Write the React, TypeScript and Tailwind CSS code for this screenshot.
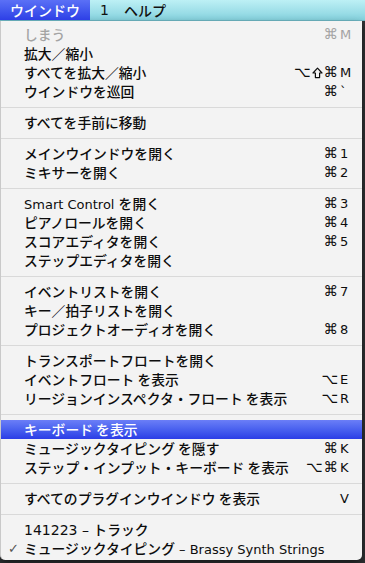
import React from "react";

type Item =
  | { sep: true }
  | {
      sep?: false;
      label: React.ReactNode;
      mod?: string;
      keyChar?: string;
      disabled?: boolean;
      active?: boolean;
      checked?: boolean;
    };

const latin = "font-['DejaVu_Sans'] text-[13px] font-normal";

const ITEMS: Item[] = [
  { label: "しまう", mod: "⌘", keyChar: "M", disabled: true },
  { label: "拡大／縮小" },
  { label: "すべてを拡大／縮小", mod: "⌥⇧⌘", keyChar: "M" },
  { label: "ウインドウを巡回", mod: "⌘", keyChar: "`" },
  { sep: true },
  { label: "すべてを手前に移動" },
  { sep: true },
  { label: "メインウインドウを開く", mod: "⌘", keyChar: "1" },
  { label: "ミキサーを開く", mod: "⌘", keyChar: "2" },
  { sep: true },
  {
    label: (
      <>
        <span className={latin}>Smart Control </span>を開く
      </>
    ),
    mod: "⌘",
    keyChar: "3",
  },
  { label: "ピアノロールを開く", mod: "⌘", keyChar: "4" },
  { label: "スコアエディタを開く", mod: "⌘", keyChar: "5" },
  { label: "ステップエディタを開く" },
  { sep: true },
  { label: "イベントリストを開く", mod: "⌘", keyChar: "7" },
  { label: "キー／拍子リストを開く" },
  { label: "プロジェクトオーディオを開く", mod: "⌘", keyChar: "8" },
  { sep: true },
  { label: "トランスポートフロートを開く" },
  { label: "イベントフロート を表示", mod: "⌥", keyChar: "E" },
  { label: "リージョンインスペクタ・フロート を表示", mod: "⌥", keyChar: "R" },
  { sep: true },
  { label: "キーボード を表示", active: true },
  { label: "ミュージックタイピング を隠す", mod: "⌘", keyChar: "K" },
  { label: "ステップ・インプット・キーボード を表示", mod: "⌥⌘", keyChar: "K" },
  { sep: true },
  { label: "すべてのプラグインウインドウ を表示", keyChar: "V" },
  { sep: true },
  {
    label: (
      <>
        <span className="font-['DejaVu_Sans'] text-[14px] font-normal">141223 – </span>トラック
      </>
    ),
  },
  {
    label: (
      <>
        ミュージックタイピング<span className={latin}> – Brassy Synth Strings</span>
      </>
    ),
    checked: true,
  },
];

function ShiftGlyph() {
  return (
    <svg width="11" height="12" viewBox="0 0 11 12" className="mr-[1px]">
      <path
        d="M5.5 1.2 L10 6 H7.6 V10.6 H3.4 V6 H1 Z"
        fill="none"
        stroke="currentColor"
        strokeWidth="1.2"
        strokeLinejoin="round"
      />
    </svg>
  );
}

function Mods({ mod }: { mod: string }) {
  return (
    <span className="flex items-center text-[14.5px]">
      {Array.from(mod).map((c, i) =>
        c === "⇧" ? (
          <ShiftGlyph key={i} />
        ) : (
          <span key={i} className="mr-[1px]">
            {c}
          </span>
        ),
      )}
    </span>
  );
}

function Row({ item }: { item: Exclude<Item, { sep: true }> }) {
  const color = item.active
    ? "text-white bg-gradient-to-b from-[#6b7ef7] to-[#2c3ce6]"
    : item.disabled
      ? "text-[#a3a3a3]"
      : "text-[#0d0d0d]";
  return (
    <div className={`flex h-[19px] items-center pr-[10px] ${color}`}>
      <span className="w-[23px] pl-[7px] font-['DejaVu_Sans'] text-[13px] text-[#555]">
        {item.checked ? "✓" : ""}
      </span>
      <span className="flex-1 whitespace-nowrap">{item.label}</span>
      {item.keyChar && (
        <span className="flex items-center font-['DejaVu_Sans'] text-[13px] font-normal">
          {item.mod && <Mods mod={item.mod} />}
          <span className="w-[13px] pl-[1px]">{item.keyChar}</span>
        </span>
      )}
    </div>
  );
}

export default function App() {
  return (
    <div className="h-[563px] w-[365px] overflow-hidden bg-[#2f3133] font-['Noto_Sans_CJK_JP',sans-serif] text-[13.8px] font-medium leading-none">
      {/* Menu bar */}
      <div className="flex h-[21px] items-center border-b border-[#6fb9c6] bg-gradient-to-b from-[#bdf0f5] to-[#86d3df] text-[14px] text-[#111]">
        <div className="flex h-full w-[90px] items-center bg-gradient-to-b from-[#5b70f6] to-[#2e3ee6] pl-[10px] text-white">
          ウインドウ
        </div>
        <span className="ml-[10px] font-['DejaVu_Sans'] text-[14px] font-normal">1</span>
        <span className="ml-[15px]">ヘルプ</span>
      </div>

      {/* Dropdown menu */}
      <div className="w-[362px] rounded-b-[5px] border-l border-[#c9c9c9] bg-[#f3f3f3] pb-[2px] pt-[4px] shadow-[0_4px_10px_rgba(0,0,0,0.5)]">
        {ITEMS.map((item, i) =>
          item.sep ? (
            <div key={i} className="flex h-[12px] items-center">
              <div className="h-px w-full bg-[#d9d9d9]" />
            </div>
          ) : (
            <Row key={i} item={item} />
          ),
        )}
      </div>
    </div>
  );
}
